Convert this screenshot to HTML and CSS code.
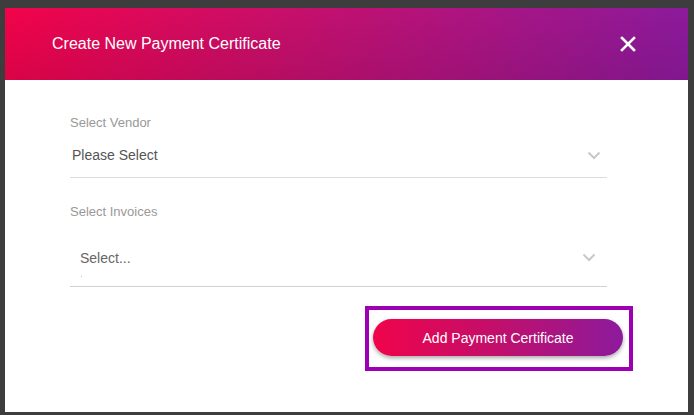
FILE: index.html
```html
<!DOCTYPE html>
<html>
<head>
<meta charset="utf-8">
<link rel="stylesheet" href="styles.css">
</head>
<body>
<div class="modal">
  <div class="modal-header">
    <h1 class="modal-title">Create New Payment Certificate</h1>
    <button class="close-btn" aria-label="Close">
      <svg width="16" height="16" viewBox="0 0 16 16"><path d="M2 2 L14 14 M14 2 L2 14" stroke="#fff" stroke-width="2.6" stroke-linecap="square"/></svg>
    </button>
  </div>
  <div class="modal-body">
    <div class="form">
      <label class="field-label">Select Vendor</label>
      <div class="select select-vendor">
        <span class="select-value">Please Select</span>
        <svg class="chevron" width="14" height="9" viewBox="0 0 14 9"><path d="M1.5 1.5 L7 7 L12.5 1.5" fill="none" stroke="#c8c8c8" stroke-width="2"/></svg>
      </div>
      <label class="field-label second">Select Invoices</label>
      <div class="select select-invoices">
        <span class="select-value placeholder">Select...</span>
        <span class="caret-mark"></span>
        <svg class="chevron" width="14" height="9" viewBox="0 0 14 9"><path d="M1.5 1.5 L7 7 L12.5 1.5" fill="none" stroke="#c8c8c8" stroke-width="2"/></svg>
      </div>
    </div>
    <div class="footer">
      <div class="highlight">
        <button class="primary-btn">Add Payment Certificate</button>
      </div>
    </div>
  </div>
</div>
</body>
</html>
```

FILE: styles.css
```css
html, body {
  margin: 0;
  padding: 0;
}
body {
  background: #3d3d3d;
  font-family: "Liberation Sans", Arial, sans-serif;
  width: 694px;
  height: 415px;
  overflow: hidden;
}
.modal {
  margin: 8px 0 0 5px;
  width: 683px;
  height: 404px;
  background: #fff;
  display: flex;
  flex-direction: column;
}
.modal-header {
  height: 72px;
  flex: none;
  box-sizing: border-box;
  padding: 0 52px 0 47px;
  display: flex;
  align-items: center;
  justify-content: space-between;
  background:
    linear-gradient(to bottom, rgba(0,0,0,0) 0%, rgba(40,0,40,0.12) 100%),
    linear-gradient(to right, #f2034a 0%, #c90f6a 40%, #8c1a9c 100%);
}
.modal-title {
  margin: 0;
  font-size: 16px;
  font-weight: normal;
  color: #fff;
  line-height: 20px;
}
.close-btn {
  border: 0;
  background: none;
  padding: 0;
  width: 16px;
  height: 16px;
  display: flex;
  cursor: pointer;
}
.modal-body {
  flex: 1;
  padding-top: 35px;
}
.form {
  margin-left: 65px;
  width: 537px;
  display: flex;
  flex-direction: column;
}
.field-label {
  font-size: 13px;
  line-height: 16px;
  color: #999;
}
.field-label.second {
  margin-top: 26px;
}
.select {
  position: relative;
  display: flex;
  align-items: center;
  justify-content: space-between;
  border-bottom: 1px solid #dcdcdc;
  box-sizing: content-box;
}
.select-vendor {
  height: 46px;
  padding: 0 6px 0 2px;
}
.select-vendor .chevron {
  margin-top: 2px;
}
.select-invoices {
  margin-top: 8px;
  height: 58px;
  padding: 0 11px 0 10px;
  border-bottom-color: #d0d0d0;
}
.select-value {
  font-size: 14px;
  color: #555;
  line-height: 16px;
}
.select-vendor .select-value {
  margin-top: 2px;
}
.select-invoices .select-value {
  margin-top: 1px;
}
.placeholder {
  color: #666;
}
.caret-mark {
  position: absolute;
  left: 11px;
  bottom: 9px;
  width: 1px;
  height: 1px;
  background: #bbb;
}
.chevron {
  display: block;
}
.footer {
  display: flex;
  justify-content: flex-end;
  padding-right: 55px;
  margin-top: 19px;
}
.highlight {
  border: 4px solid #9d00b3;
  padding: 9px 6px 11px 4px;
}
.primary-btn {
  width: 250px;
  height: 37px;
  border: 0;
  border-radius: 19px;
  background: linear-gradient(to right, #f0034b 0%, #c10f6c 50%, #8c1a9c 100%);
  color: #fff;
  font-family: "Liberation Sans", Arial, sans-serif;
  font-size: 14px;
  box-shadow: 0 2px 4px rgba(0,0,0,0.35);
  cursor: pointer;
  display: block;
}
```
